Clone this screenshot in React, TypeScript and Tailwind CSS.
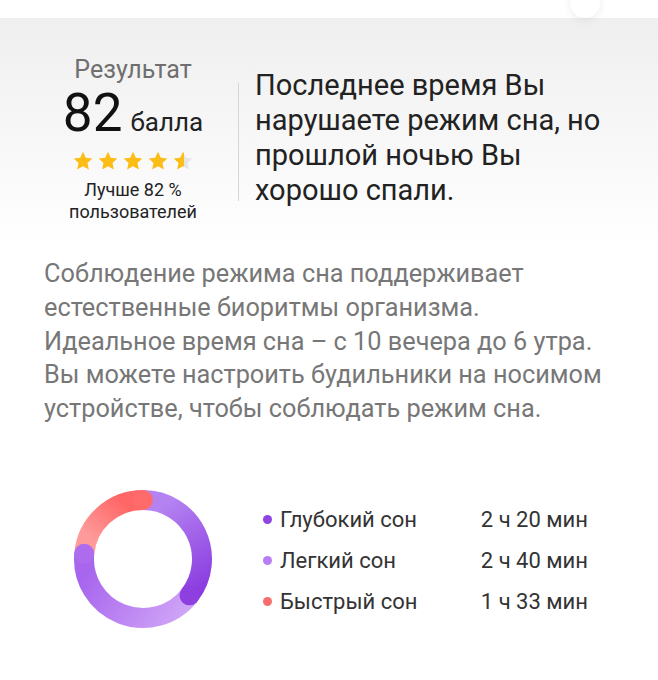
import React from "react";

type Stage = {
  label: string;
  value: string;
  dot: string;
};

const stages: Stage[] = [
  { label: "Глубокий сон", value: "2 ч 20 мин", dot: "bg-[#8f45e3]" },
  { label: "Легкий сон", value: "2 ч 40 мин", dot: "bg-[#b57ef3]" },
  { label: "Быстрый сон", value: "1 ч 33 мин", dot: "bg-[#f76e6e]" },
];

function Star({ fill = 1 }: { fill?: number }) {
  const id = `half-${fill}`;
  return (
    <svg width="22" height="22" viewBox="0 0 24 24">
      <defs>
        <linearGradient id={id} x1="0" x2="1" y1="0" y2="0">
          <stop offset={fill} stopColor="#fbbd16" />
          <stop offset={fill} stopColor="#e4e4e4" />
        </linearGradient>
      </defs>
      <path
        d="M12 1.8l3.1 6.6 7.1.8-5.3 4.9 1.5 7.1L12 17.6l-6.4 3.6 1.5-7.1-5.3-4.9 7.1-.8z"
        fill={`url(#${id})`}
      />
    </svg>
  );
}

function polar(cx: number, cy: number, r: number, deg: number) {
  const rad = ((deg - 90) * Math.PI) / 180;
  return [cx + r * Math.cos(rad), cy + r * Math.sin(rad)];
}

function arc(from: number, to: number) {
  const [x1, y1] = polar(70, 70, 59, from);
  const [x2, y2] = polar(70, 70, 59, to);
  const large = to - from > 180 ? 1 : 0;
  return `M${x1} ${y1} A59 59 0 ${large} 1 ${x2} ${y2}`;
}

function SleepRing() {
  const deepEnd = 128;
  const lightEnd = 275;
  const caps = [
    { deg: 360, color: "#ff6a6a" },
    { deg: deepEnd, color: "#8d3fe0" },
    { deg: lightEnd, color: "#ad6cee" },
  ];
  return (
    <svg width="140" height="140" viewBox="0 0 140 140">
      <defs>
        <linearGradient id="deep" x1="0.5" y1="0" x2="0.9" y2="1">
          <stop offset="0" stopColor="#b482f1" />
          <stop offset="1" stopColor="#8a3bdf" />
        </linearGradient>
        <linearGradient id="light" x1="1" y1="0.8" x2="0" y2="0.4">
          <stop offset="0" stopColor="#cfa4f7" />
          <stop offset="1" stopColor="#a866ee" />
        </linearGradient>
        <linearGradient id="rem" x1="0" y1="0.6" x2="0.6" y2="0">
          <stop offset="0" stopColor="#ff9a9a" />
          <stop offset="1" stopColor="#ff6767" />
        </linearGradient>
      </defs>
      <path d={arc(0, deepEnd)} stroke="url(#deep)" strokeWidth="20" fill="none" />
      <path d={arc(deepEnd, lightEnd)} stroke="url(#light)" strokeWidth="20" fill="none" />
      <path d={arc(lightEnd, 360)} stroke="url(#rem)" strokeWidth="20" fill="none" />
      {caps.map((cap) => {
        const [x, y] = polar(70, 70, 59, cap.deg);
        return <circle key={cap.deg} cx={x} cy={y} r="10" fill={cap.color} />;
      })}
    </svg>
  );
}

export default function App() {
  return (
    <div className="relative h-[680px] w-[658px] overflow-hidden bg-white font-['Roboto',sans-serif]">
      <div className="h-[18px] bg-white" />
      <div className="absolute left-[570px] top-[-12px] h-[30px] w-[30px] rounded-full bg-white shadow-[0_2px_8px_rgba(0,0,0,0.08)]" />

      <div className="bg-gradient-to-b from-[#efefef] to-white to-[230px] pt-[39px]">
        <div className="flex">
          <div className="ml-[58px] flex w-[150px] flex-col items-center">
            <p className="text-[25px] leading-[26px] text-[#6f6f6f]">Результат</p>
            <div className="mt-[4px] flex items-baseline gap-[8px]">
              <span className="text-[53px] leading-none text-[#111]">82</span>
              <span className="text-[26px] leading-none text-[#222]">балла</span>
            </div>
            <div className="mt-[10px] flex gap-[3px]">
              <Star />
              <Star />
              <Star />
              <Star />
              <Star fill={0.55} />
            </div>
            <p className="mt-[7px] text-center text-[18px] leading-[22px] text-[#222]">
              Лучше 82 %
              <br />
              пользователей
            </p>
          </div>
          <div className="ml-[30px] mt-[26px] h-[118px] w-px bg-[#d6d6d6]" />
          <p className="ml-[16px] mt-[11px] whitespace-nowrap text-[29px] leading-[35px] text-[#222]">
            Последнее время Вы
            <br />
            нарушаете режим сна, но
            <br />
            прошлой ночью Вы
            <br />
            хорошо спали.
          </p>
        </div>

        <p className="ml-[44px] mt-[34px] whitespace-nowrap text-[25.3px] leading-[33.75px] text-[#777]">
          Соблюдение режима сна поддерживает
          <br />
          естественные биоритмы организма.
          <br />
          Идеальное время сна – с 10 вечера до 6 утра.
          <br />
          Вы можете настроить будильники на носимом
          <br />
          устройстве, чтобы соблюдать режим сна.
        </p>
      </div>

      <div className="mt-[63px] flex items-center">
        <div className="ml-[73px]">
          <SleepRing />
        </div>
        <div className="ml-[50px] mt-[3px] flex w-[325px] flex-col gap-[16px]">
          {stages.map((stage) => (
            <div key={stage.label} className="flex items-center text-[22px] leading-[25px] text-[#333]">
              <span className={`h-[9px] w-[9px] rounded-full ${stage.dot}`} />
              <span className="ml-[8px] flex-1">{stage.label}</span>
              <span>{stage.value}</span>
            </div>
          ))}
        </div>
      </div>
    </div>
  );
}
